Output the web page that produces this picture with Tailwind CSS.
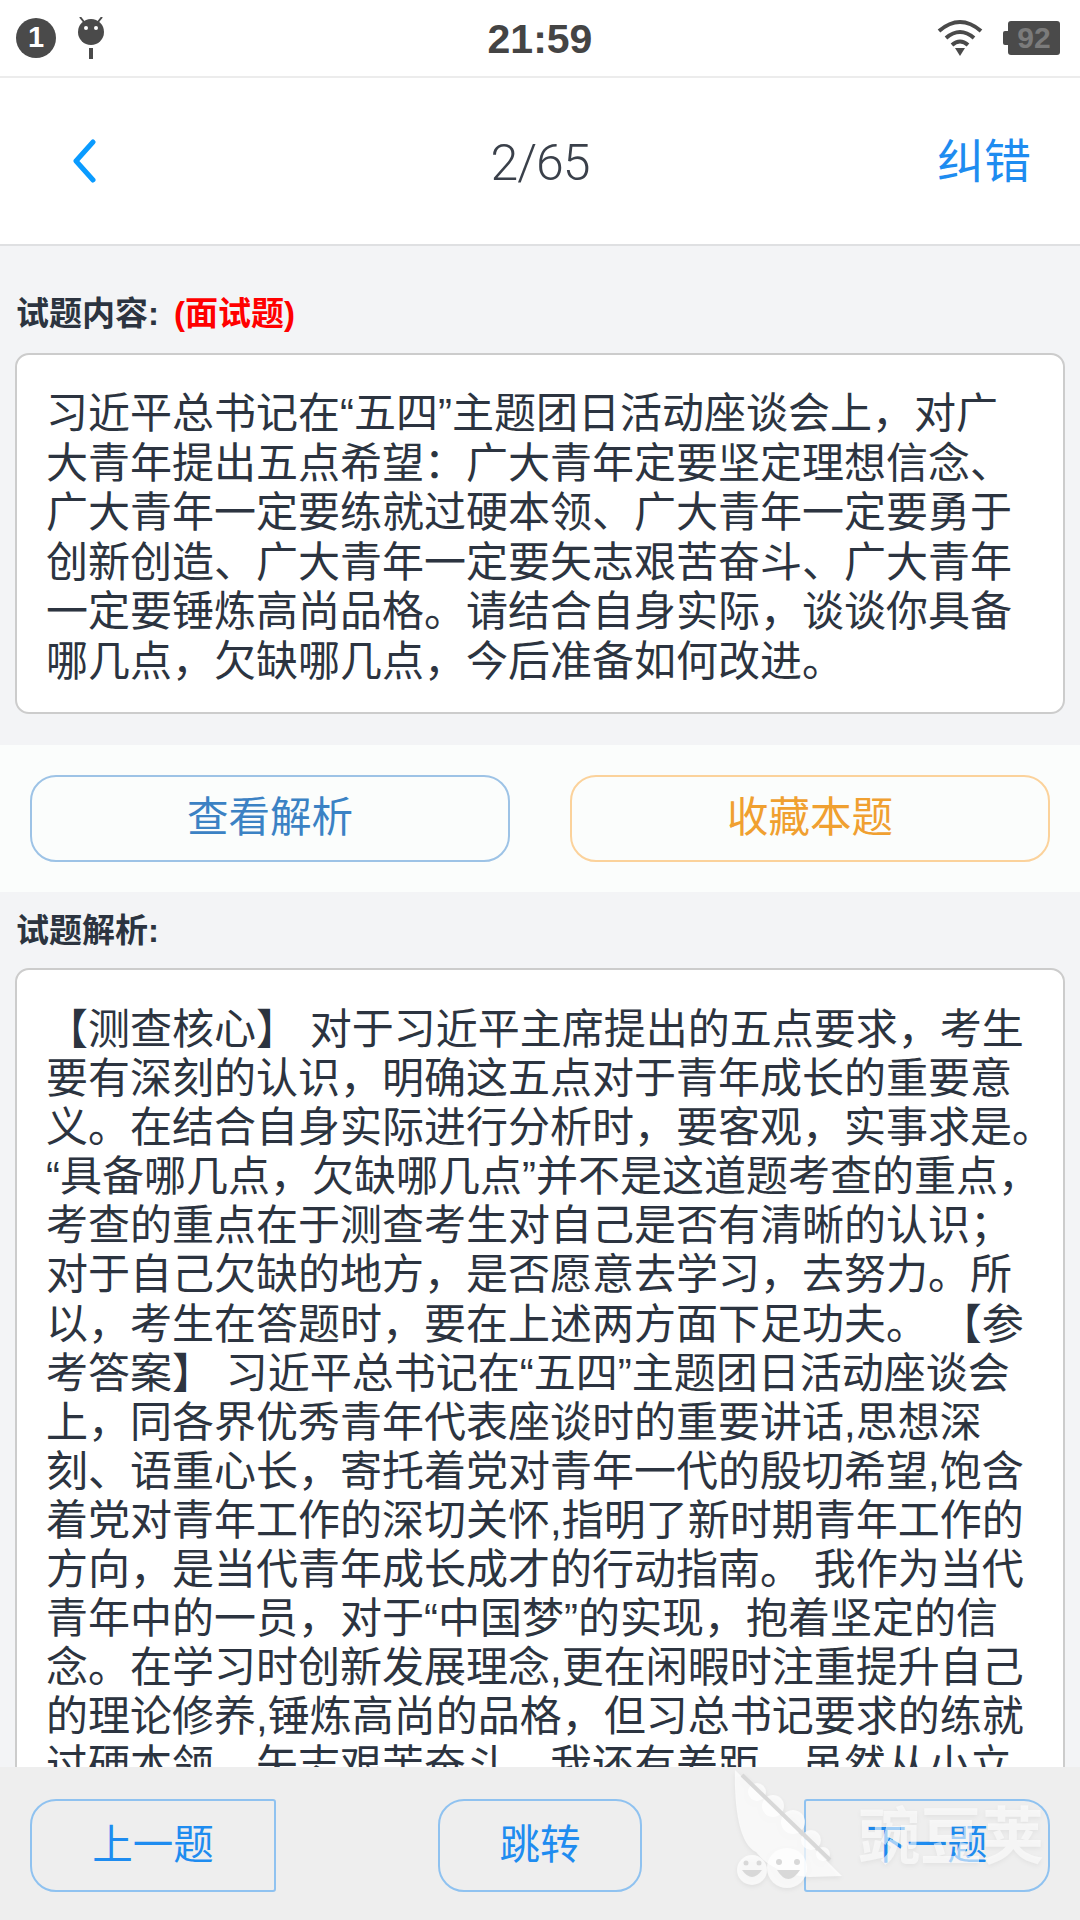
<!DOCTYPE html>
<html lang="zh-CN">
<head>
  <meta charset="UTF-8" />
  <meta name="viewport" content="width=device-width, initial-scale=1.0" />
  <title>试题解析</title>
  <script src="https://cdn.jsdelivr.net/npm/@tailwindcss/browser@4"></script>
</head>
<body class="bg-[#f3f4f6]">
<div class="relative w-[1080px] h-[1920px] overflow-hidden flex flex-col font-['Liberation_Sans','Noto_Sans_CJK_SC',sans-serif] text-[#2c3440]">

  <!-- Status bar -->
  <div class="h-[78px] shrink-0 bg-white border-b-2 border-[#ececec] grid grid-cols-3 items-center">
    <div class="flex items-center gap-[20px] pl-[16px]">
      <div class="w-[40px] h-[40px] rounded-full bg-[#4a4a4a] text-white font-bold text-[29px] flex items-center justify-center">1</div>
      <svg class="w-[30px] h-[42px]" viewBox="0 0 30 42">
        <path d="M8 5 L4 0 M22 5 L26 0" stroke="#4a4a4a" stroke-width="2"/>
        <circle cx="15" cy="15" r="13" fill="#4a4a4a"/>
        <circle cx="10" cy="11" r="2" fill="#fff"/>
        <circle cx="20" cy="11" r="2" fill="#fff"/>
        <rect x="13" y="31" width="4" height="11" fill="#4a4a4a"/>
      </svg>
    </div>
    <div class="text-center font-bold text-[41px] text-[#444] pt-[4px]">21:59</div>
    <div class="flex items-center justify-end gap-[20px] pr-[20px]">
      <svg class="w-[46px] h-[38px]" viewBox="0 0 46 38" fill="none" stroke="#4a4a4a" stroke-width="4">
        <path d="M2 12 Q23 -6 44 12"/>
        <path d="M9 19 Q23 7 37 19"/>
        <path d="M15 26 Q23 19 31 26"/>
        <path d="M18 29 L28 29 L23 37 Z" fill="#4a4a4a" stroke="none"/>
      </svg>
      <div class="flex items-center">
        <div class="w-[5px] h-[14px] bg-[#4a4a4a] rounded-l-[2px]"></div>
        <div class="w-[52px] h-[34px] bg-[#4a4a4a] rounded-[3px] text-[#7b7b7b] font-bold text-[30px] leading-[34px] text-center">92</div>
      </div>
    </div>
  </div>

  <!-- Nav -->
  <div class="h-[168px] shrink-0 bg-white border-b-2 border-[#dfe0e2] grid grid-cols-3 items-center">
    <div class="pl-[72px]">
      <svg class="w-[24px] h-[44px]" viewBox="0 0 24 44" fill="none" stroke="#0a9bff" stroke-width="5" stroke-linecap="round" stroke-linejoin="round">
        <path d="M21 3 L4 22 L21 41"/>
      </svg>
    </div>
    <div class="text-center font-['Roboto',sans-serif] font-light text-[50px] tracking-[-1px] text-[#3a404a] pt-[5px]">2/65</div>
    <div class="text-right pr-[49px] text-[47px] text-[#1e8cf0] pt-[2px]">纠错</div>
  </div>

  <!-- Question -->
  <div class="flex-1 min-h-0 overflow-hidden">
    <div class="h-[107px] pl-[16px] pt-[50px] font-bold text-[33px] leading-[36px]">试题内容:<span class="text-[#ff0000] ml-[15px]">(面试题)</span></div>
    <div class="mx-[15px] h-[361px] bg-white border-2 border-[#cccccc] rounded-[14px] pl-[29px] pt-[34px] text-[42px] leading-[49.6px] whitespace-nowrap">
      习近平总书记在“五四”主题团日活动座谈会上&#xFF0C;对广<br>
      大青年提出五点希望&#xFF1A;广大青年定要坚定理想信念、<br>
      广大青年一定要练就过硬本领、广大青年一定要勇于<br>
      创新创造、广大青年一定要矢志艰苦奋斗、广大青年<br>
      一定要锤炼高尚品格。请结合自身实际&#xFF0C;谈谈你具备<br>
      哪几点&#xFF0C;欠缺哪几点&#xFF0C;今后准备如何改进。
    </div>

    <!-- Actions -->
    <div class="mt-[31px] h-[147px] bg-[#fbfdfc] px-[30px] flex items-center justify-between">
      <button class="w-[480px] h-[87px] border-2 border-[#9dc3e6] rounded-[26px] text-[41.5px] text-[#3b82c4]">查看解析</button>
      <button class="w-[480px] h-[87px] border-2 border-[#fbd29b] rounded-[26px] text-[41.5px] text-[#f0a030]">收藏本题</button>
    </div>

    <!-- Analysis -->
    <div class="h-[76px] pl-[16px] pt-[21px] font-bold text-[33px] leading-[36px]">试题解析:</div>
    <div class="mx-[15px] h-[900px] bg-white border-2 border-[#cccccc] rounded-[14px] pl-[29px] pt-[35px] text-[42px] leading-[49.1px] whitespace-nowrap">
      【测查核心】 对于习近平主席提出的五点要求&#xFF0C;考生<br>
      要有深刻的认识&#xFF0C;明确这五点对于青年成长的重要意<br>
      义。在结合自身实际进行分析时&#xFF0C;要客观&#xFF0C;实事求是。<br>
      “具备哪几点&#xFF0C;欠缺哪几点”并不是这道题考查的重点&#xFF0C;<br>
      考查的重点在于测查考生对自己是否有清晰的认识&#xFF1B;<br>
      对于自己欠缺的地方&#xFF0C;是否愿意去学习&#xFF0C;去努力。所<br>
      以&#xFF0C;考生在答题时&#xFF0C;要在上述两方面下足功夫。 【参<br>
      考答案】 习近平总书记在“五四”主题团日活动座谈会<br>
      上&#xFF0C;同各界优秀青年代表座谈时的重要讲话,思想深<br>
      刻、语重心长&#xFF0C;寄托着党对青年一代的殷切希望,饱含<br>
      着党对青年工作的深切关怀,指明了新时期青年工作的<br>
      方向&#xFF0C;是当代青年成长成才的行动指南。 我作为当代<br>
      青年中的一员&#xFF0C;对于“中国梦”的实现&#xFF0C;抱着坚定的信<br>
      念。在学习时创新发展理念,更在闲暇时注重提升自己<br>
      的理论修养,锤炼高尚的品格&#xFF0C;但习总书记要求的练就<br>
      过硬本领、矢志艰苦奋斗&#xFF0C;我还有差距&#xFF0C;虽然从小立
    </div>
  </div>

  <!-- Bottom bar -->
  <div class="h-[153px] shrink-0 bg-[#eeeeee] flex items-start justify-between px-[30px] pt-[32px] text-[40.5px] text-[#1e8cf0]">
    <button class="w-[246px] h-[93px] border-2 border-[#8fc2f0] rounded-l-[26px] rounded-r-[3px]">上一题</button>
    <button class="w-[204px] h-[93px] border-2 border-[#8fc2f0] rounded-[26px]">跳转</button>
    <button class="w-[246px] h-[93px] border-2 border-[#8fc2f0] rounded-r-[26px] rounded-l-[3px]">下一题</button>
  </div>

  <!-- Watermark over the bottom bar -->
  <svg class="absolute left-[700px] top-[1760px] w-[380px] h-[160px] pointer-events-none drop-shadow-[0_2px_2px_rgba(0,0,0,0.08)]" viewBox="0 0 380 160">
    <g fill="#ffffff" fill-opacity="0.72">
      <path d="M35 10 C34 50 40 85 56 92 C68 108 90 116 110 117 L142 116 Z"/>
      <circle cx="57" cy="32" r="9"/>
      <circle cx="73" cy="46" r="11"/>
      <circle cx="93" cy="62" r="12"/>
      <circle cx="111" cy="80" r="10"/>
      <circle cx="123" cy="94" r="7"/>
      <circle cx="52" cy="110" r="15"/>
      <circle cx="87" cy="108" r="20"/>
    </g>
    <path d="M42 15 L130 100" stroke="#d8d8d8" stroke-width="4"/>
    <g fill="#d8d8d8">
      <circle cx="46" cy="103" r="2.5"/>
      <circle cx="59" cy="103" r="2.5"/>
      <circle cx="79" cy="102" r="3"/>
      <circle cx="97" cy="102" r="3"/>
      <path d="M42 110 Q52 124 62 110 Z"/>
      <path d="M77 110 Q88 128 100 110 Z"/>
    </g>
  </svg>
  <div class="absolute left-[858px] top-[1803px] text-[62px] leading-[70px] font-bold text-white/60 whitespace-nowrap pointer-events-none drop-shadow-[0_2px_2px_rgba(0,0,0,0.08)]">豌豆荚</div>
</div>
</body>
</html>
